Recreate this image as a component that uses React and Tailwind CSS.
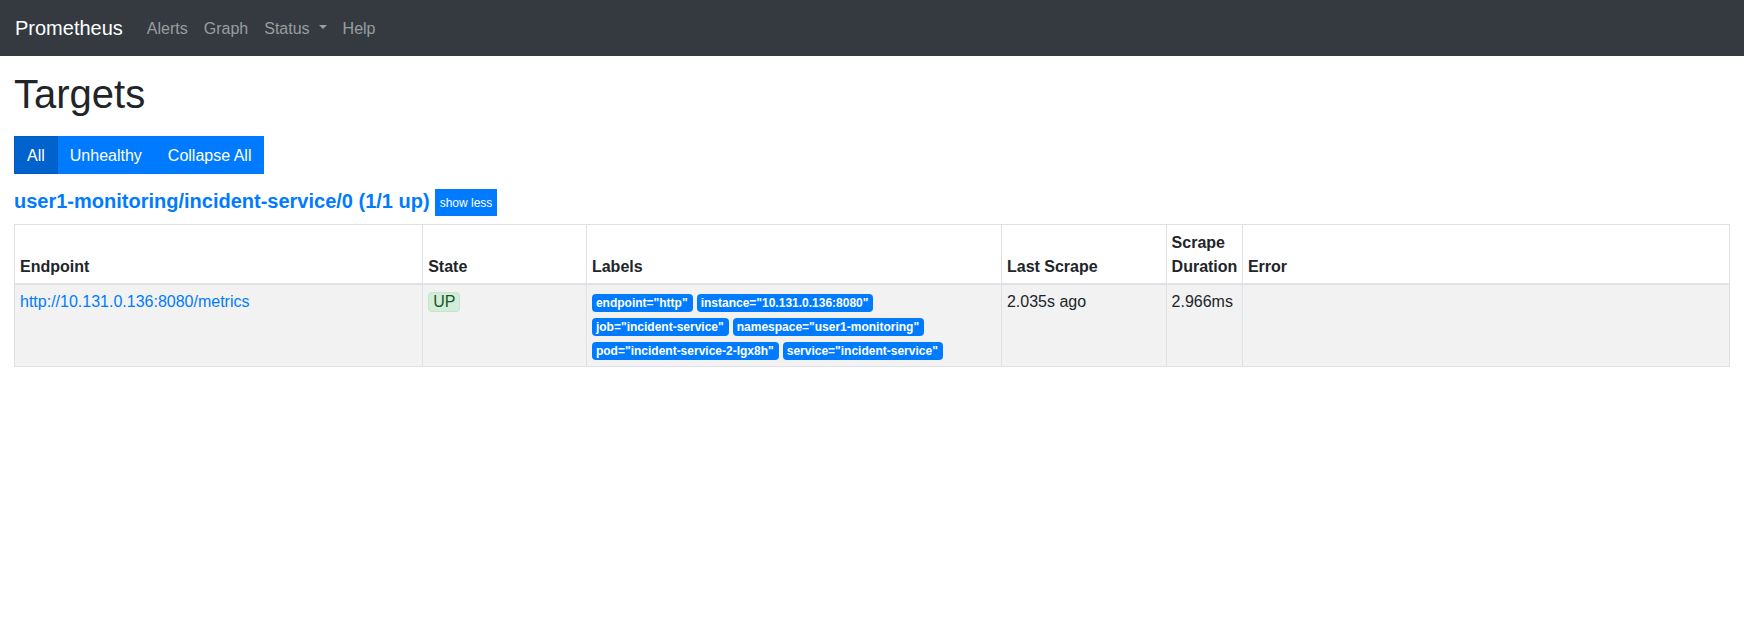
const labels = [
  'endpoint="http"',
  'instance="10.131.0.136:8080"',
  'job="incident-service"',
  'namespace="user1-monitoring"',
  'pod="incident-service-2-lgx8h"',
  'service="incident-service"',
];

const columns = [
  { name: "Endpoint", width: "w-[23.8%]" },
  { name: "State", width: "w-[9.55%]" },
  { name: "Labels", width: "w-[24.2%]" },
  { name: "Last Scrape", width: "w-[9.6%]" },
  { name: "Scrape Duration", width: "w-[4.45%]" },
  { name: "Error", width: "w-[28.4%]" },
];

function NavLink({ children }) {
  return (
    <a href="#" className="flex items-center px-2 pt-[9px] pb-[7px] text-white/50 hover:text-white/75">
      {children}
    </a>
  );
}

function Navbar() {
  return (
    <nav className="flex h-14 items-center bg-[#343a40] px-[15px]">
      <a href="#" className="mr-4 text-xl text-white">Prometheus</a>
      <NavLink>Alerts</NavLink>
      <NavLink>Graph</NavLink>
      <NavLink>
        Status
        <svg className="mb-1 ml-[9px] h-1 w-2" viewBox="0 0 8 4" fill="currentColor" aria-hidden="true">
          <path d="M0 0h8L4 4z" />
        </svg>
      </NavLink>
      <NavLink>Help</NavLink>
    </nav>
  );
}

function FilterButtons() {
  const button = "border px-3 pt-[7px] pb-[5px]";
  return (
    <div className="flex text-white" role="group" aria-label="Target filter">
      <button type="button" className={`${button} z-10 border-[#005cbf] bg-[#0062cc]`}>All</button>
      <button type="button" className={`${button} -ml-px border-[#007bff] bg-[#007bff]`}>Unhealthy</button>
      <button type="button" className={`${button} border-[#007bff] bg-[#007bff]`}>Collapse All</button>
    </div>
  );
}

function TargetsTable() {
  const edge = "border border-[#dee2e6] text-left";
  const cell = `${edge} p-[5px]`;
  return (
    <table className="mt-2 w-full table-fixed border-collapse border border-[#dee2e6]">
      <thead>
        <tr>
          {columns.map((column) => (
            <th key={column.name} className={`${edge} ${column.width} border-b-2 px-[5px] pt-1.5 pb-1 align-bottom font-bold`}>
              {column.name}
            </th>
          ))}
        </tr>
      </thead>
      <tbody>
        <tr className="bg-[#f2f2f2] align-top">
          <td className={cell}>
            <a href="#" className="text-[#007bff] hover:underline">http://10.131.0.136:8080/metrics</a>
          </td>
          <td className={cell}>
            <span className="rounded border border-[#c3e6cb] bg-[#d4edda] px-1 pb-px text-[#155724]">UP</span>
          </td>
          <td className={cell}>
            <div className="flex flex-wrap gap-x-1 gap-y-1.5 pt-1 pb-px">
              {labels.map((label) => (
                <span key={label} className="rounded bg-[#007bff] pr-[5px] pl-1 text-xs leading-[18px] font-bold whitespace-nowrap text-white">
                  {label}
                </span>
              ))}
            </div>
          </td>
          <td className={cell}>2.035s ago</td>
          <td className={cell}>2.966ms</td>
          <td className={cell}></td>
        </tr>
      </tbody>
    </table>
  );
}

export default function App() {
  return (
    <div className="font-['Liberation_Sans',Arial,sans-serif] text-base leading-6 text-[#212529]">
      <Navbar />
      <main className="px-[14px] pt-[14px]">
        <h1 className="text-[40px] leading-[48px]">Targets</h1>
        <div className="mt-[18px]">
          <FilterButtons />
        </div>
        <div className="mt-[15px] flex items-start gap-[5px]">
          <h2 className="text-xl leading-6 font-bold text-[#007bff]">
            <a href="#">user1-monitoring/incident-service/0 (1/1 up)</a>
          </h2>
          <button type="button" className="h-[27px] bg-[#007bff] px-[5px] text-xs text-white">show less</button>
        </div>
        <TargetsTable />
      </main>
    </div>
  );
}
